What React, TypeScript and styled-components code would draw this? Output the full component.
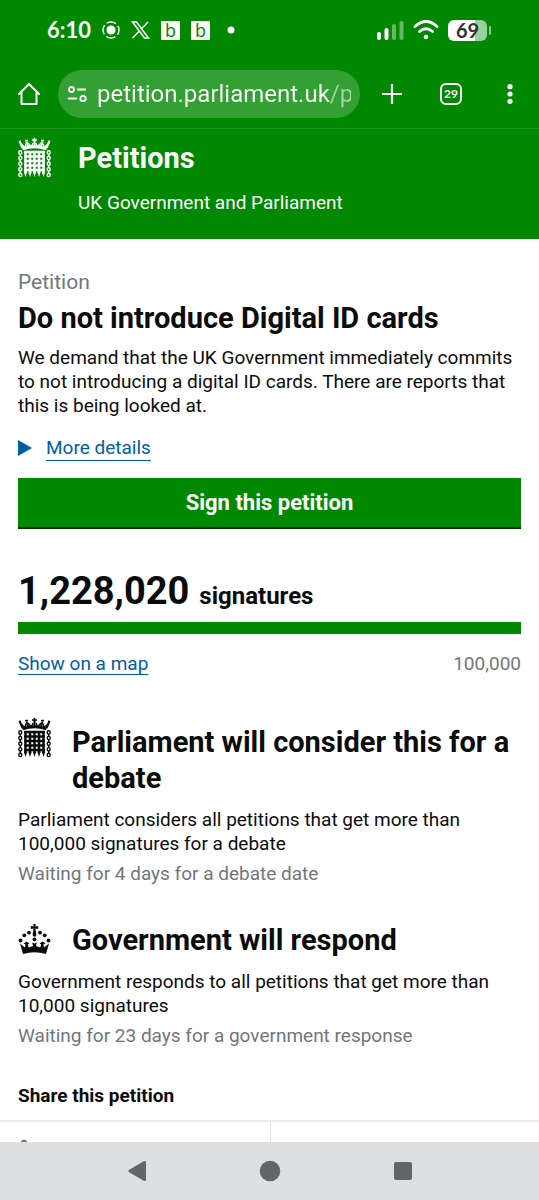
import React from 'react';
import styled, { createGlobalStyle } from 'styled-components';

const green = '#008800';
const ink = '#0b0c0c';
const grey = '#6f777b';
const blue = '#005ea5';

const GlobalStyle = createGlobalStyle`
  * { box-sizing: border-box; }
  body { margin: 0; background: #fff; }
  body, button, input { font-family: Roboto, "Liberation Sans", sans-serif; }
  h1, h2, h3, p { margin: 0; }
`;

const Screen = styled.div`
  display: flex;
  flex-direction: column;
  height: 100vh;
  color: ${ink};
`;

const BrowserChrome = styled.div`
  flex: none;
  background: ${green};
  color: #fff;
  border-bottom: 1px solid #1f961f;
`;

const StatusBar = styled.div`
  display: flex;
  align-items: center;
  justify-content: space-between;
  height: 60px;
  padding: 0 48px 0 47px;
`;

const StatusGroup = styled.div<{ $gap: number }>`
  display: flex;
  align-items: center;
  gap: ${({ $gap }) => $gap}px;
`;

const Clock = styled.span`
  font: 700 22px/28px Lato, sans-serif;
`;

const AppBadge = styled.span`
  display: grid;
  place-items: center;
  width: 19px;
  height: 19px;
  border-radius: 1px;
  background: #fff;
  color: ${green};
  font: 400 18px/19px "Open Sans", sans-serif;
`;

const Battery = styled.span`
  display: flex;
  align-items: center;
  gap: 2px;
  &::after {
    content: '';
    width: 2px;
    height: 9px;
    border-radius: 1px;
    background: #8cca8c;
  }
`;

const BatteryLevel = styled.span`
  width: 39px;
  height: 21px;
  border-radius: 6px;
  background: linear-gradient(90deg, #fff 69%, #99cf99 69%);
  color: #333;
  font: 700 20px/20px Lato, sans-serif;
  text-align: center;
`;

const AddressBar = styled.div`
  display: flex;
  align-items: center;
  height: 68px;
  padding: 0 17px;
`;

const IconButton = styled.button`
  display: grid;
  place-items: center;
  width: 24px;
  height: 48px;
  padding: 0;
  border: 0;
  background: none;
  color: #fff;
`;

const TabCount = styled.span`
  width: 22px;
  height: 22px;
  border: 2px solid #fff;
  border-radius: 6px;
  font: 700 12px/18px Lato, sans-serif;
  text-align: center;
`;

const Omnibox = styled.label`
  display: flex;
  align-items: center;
  flex: 1;
  gap: 10px;
  min-width: 0;
  height: 48px;
  margin: 0 20px 0 17px;
  padding: 0 9px 0 10px;
  border-radius: 24px;
  background: #33a033;
`;

const UrlInput = styled.input`
  flex: 1;
  min-width: 0;
  height: 40px;
  padding: 0;
  border: 0;
  outline: 0;
  color: #fff;
  background: linear-gradient(90deg, #fff 91%, #a3d5a3 92%);
  background-clip: text;
  -webkit-background-clip: text;
  -webkit-text-fill-color: transparent;
  font-size: 24px;
  line-height: 40px;
`;

const Actions = styled.div`
  display: flex;
  gap: 35px;
`;

const SiteHeader = styled.header`
  display: flex;
  flex: none;
  gap: 27px;
  min-height: 110px;
  padding: 8px 18px 0;
  background: ${green};
  color: #fff;
`;

const SiteTitle = styled.p`
  font-size: 29px;
  line-height: 42px;
  font-weight: 700;
`;

const SiteTagline = styled.p`
  margin-top: 12px;
  font-size: 19px;
  line-height: 24px;
`;

const Main = styled.main`
  flex: 1;
  min-height: 0;
  overflow: hidden;
`;

const Content = styled.div`
  padding: 30px 18px 0;
`;

const Kicker = styled.p`
  color: ${grey};
  font-size: 21px;
  line-height: 26px;
`;

const Title = styled.h1`
  margin-top: 5px;
  font-size: 29px;
  line-height: 36px;
  font-weight: 700;
`;

const Text = styled.p`
  font-size: 19px;
  line-height: 24px;
`;

const Lead = styled(Text)`
  margin-top: 10px;
`;

const Waiting = styled(Text)`
  margin-top: 6px;
  color: ${grey};
`;

const TextLink = styled.a`
  color: ${blue};
  font-size: 19px;
  line-height: 24px;
  text-decoration: underline;
  text-decoration-thickness: 1px;
  text-underline-offset: 4px;
  text-decoration-skip-ink: none;
`;

const MoreDetails = styled(TextLink)`
  display: flex;
  width: fit-content;
  gap: 14px;
  margin-top: 18px;
  text-decoration: none;
  svg { margin-top: 4px; }
  span { border-bottom: 1px solid; }
`;

const SignButton = styled.button`
  display: block;
  width: 100%;
  height: 49px;
  margin-top: 17px;
  padding: 0;
  border: 0;
  background: ${green};
  box-shadow: 0 2px 0 #003300;
  color: #fff;
  font-size: 22px;
  line-height: 49px;
  font-weight: 700;
`;

const Count = styled.p`
  display: flex;
  align-items: baseline;
  gap: 10px;
  margin-top: 40px;
  font-size: 24px;
  line-height: 48px;
  font-weight: 700;
  strong {
    font-size: 38px;
    font-weight: 700;
  }
`;

const Progress = styled.div`
  height: 12px;
  margin-top: 2px;
  background: ${green};
`;

const CountMeta = styled.div`
  display: flex;
  justify-content: space-between;
  margin-top: 18px;
  color: ${grey};
  font-size: 19px;
  line-height: 24px;
`;

const Stage = styled.section`
  margin-top: 36px;
`;

const FirstStage = styled(Stage)`
  margin-top: 41px;
`;

const StageHeading = styled.div<{ $drop?: boolean }>`
  display: flex;
  align-items: flex-start;
  gap: 21px;
  margin-bottom: 12px;
  svg { flex: none; }
  h2 {
    padding-top: ${({ $drop }) => ($drop ? 7 : 0)}px;
    font-size: 29px;
    line-height: 36px;
    font-weight: 700;
  }
`;

const ShareTitle = styled.h2`
  margin-top: 36px;
  font-size: 19px;
  line-height: 24px;
  font-weight: 700;
`;

const ShareGrid = styled.div`
  display: grid;
  grid-template-columns: 1fr 1fr;
  margin-top: 12px;
  border-top: 2px solid #ebebeb;
`;

const ShareCell = styled.div`
  height: 60px;
  padding: 17px 18px 0;
  & + & { border-left: 1px solid #e4e4e4; }
`;

const NavBar = styled.nav`
  display: flex;
  flex: none;
  align-items: center;
  justify-content: center;
  gap: 109px;
  height: 58px;
  background: #dedfe1;
  button { color: #646566; }
`;

const range = (n: number) => Array.from({ length: n }, (_, i) => i);

const Portcullis = () => (
  <svg width="33" height="41" viewBox="0 0 33 41" fill="none" stroke="currentColor" aria-hidden="true">
    <path d="M4.500 11.800Q16.500 7.600 28.500 11.800" strokeWidth="3" />
    <path d="M4.500 11 1.500 4M28.500 11l3-7M10 9.500 8.500 4.500M23 9.500l1.500-5M16.500 9V3" strokeWidth="2" />
    <path d="M2.500 6.500 7 10.500l1-4M30.500 6.500 26 10.500l-1-4M10 6l3.500 4 1.500-4M23 6l-3.500 4L18 6" strokeWidth="1.400" />
    <path d="M14 3h5M16.500.8v4M7 3.500h3M23 3.500h3M1 4.500h2M30 4.500h2" strokeWidth="1.600" />
    <g strokeWidth="2.500">
      {range(5).map((i) => <path key={i} d={`M${7.500 + i * 4.500} 14v22`} />)}
      {range(5).map((i) => <path key={i} d={`M6.200 ${15 + i * 4.500}h20.600`} />)}
    </g>
    <g fill="currentColor" stroke="none">
      {range(5).map((i) => <path key={i} d={`M${5.800 + i * 4.500} 34.500h3.400l-1.700 5.500z`} />)}
    </g>
    <g strokeWidth="1.400">
      {[2.300, 30.700].map((x) => range(5).map((i) => <ellipse key={`${x}-${i}`} cx={x} cy={15.500 + i * 5.600} rx="1.500" ry="1.700" />))}
      {[2.300, 30.700].map((x) => range(4).map((i) => <path key={`${x}-${i}`} d={`M${x} ${17 + i * 5.600}v2.600`} />))}
    </g>
  </svg>
);

const Crown = () => (
  <svg width="33" height="36" viewBox="0 0 33 36" fill="currentColor" aria-hidden="true">
    <path d="M15.300 2h2.400l-.3 2.600 2.800-.5v3l-2.800-.5.9 5.400h-3.600l.9-5.400-2.800.5v-3l2.800.5z" />
    {[[11, 10.700], [22, 10.700], [6.300, 13.300], [26.700, 13.300], [2.500, 18.500], [30.500, 18.500], [16.500, 12.800], [16.500, 17.300]].map(([x, y]) => (
      <circle key={`${x}-${y}`} cx={x} cy={y} r="1.900" />
    ))}
    <path d="M5 32 2 21.500l5 4 .5-3.200-2-.8 3-2 3 2-1.700 1 1 3 4.200-1.500-.8-3.500 2.300 1 2.300-1-.8 3.500 4.200 1.500 1-3-1.700-1 3-2 3 2-2 .8.500 3.200 5-4L28 32Q16.500 28.500 5 32z" />
  </svg>
);

export default function App() {
  return (
    <>
      <GlobalStyle />
      <Screen>
        <BrowserChrome>
          <StatusBar>
            <StatusGroup $gap={11}>
              <Clock>6:10</Clock>
              <svg width="18" height="18" viewBox="0 0 18 18" fill="none" stroke="#fff">
                <circle cx="9" cy="9" r="4.500" fill="#fff" stroke="none" />
                <circle cx="9" cy="9" r="8" strokeWidth="1.400" strokeDasharray="9.600 3" strokeDashoffset="4.800" />
              </svg>
              <svg width="19" height="18" viewBox="0 0 19 18" fill="none" stroke="#fff" strokeWidth="1.500">
                <path d="M1.500 1h4l12 16h-4zM17 1l-7 7.300M8.300 10 1.500 17" />
              </svg>
              <AppBadge>b</AppBadge>
              <AppBadge>b</AppBadge>
              <svg width="26" height="8" viewBox="0 0 26 8"><circle cx="10" cy="4" r="3.500" fill="#fff" /></svg>
            </StatusGroup>
            <StatusGroup $gap={9}>
              <svg width="27" height="19" viewBox="0 0 27 19" fill="#fff">
                <rect y="11" width="4" height="8" rx="2" />
                <rect x="7.500" y="7" width="4" height="12" rx="2" />
                <rect x="15" y="3" width="4" height="16" rx="2" opacity=".4" />
                <rect x="22.500" width="4" height="19" rx="2" opacity=".4" />
              </svg>
              <svg width="26" height="20" viewBox="0 0 26 20" fill="none" stroke="#fff" strokeWidth="2.800" strokeLinecap="round">
                <path d="M2 6.500Q13-3.500 24 6.500M6.500 11.500Q13 6 19.500 11.500" />
                <circle cx="13" cy="17" r="2.300" fill="#fff" stroke="none" />
              </svg>
              <Battery><BatteryLevel>69</BatteryLevel></Battery>
            </StatusGroup>
          </StatusBar>
          <AddressBar>
            <IconButton aria-label="Home">
              <svg width="24" height="24" viewBox="0 0 24 24" fill="none" stroke="#fff" strokeWidth="2" strokeLinejoin="round" strokeLinecap="round">
                <path d="M2 12 12 2l10 10M4.500 10v12h15V10" />
              </svg>
            </IconButton>
            <Omnibox>
              <svg width="19" height="16" viewBox="0 0 19 16" fill="none" stroke="#fff" strokeWidth="1.800">
                <circle cx="3.500" cy="3.500" r="2.500" /><path d="M9 3.500h9M0 12.500h9" /><circle cx="15" cy="12.500" r="2.700" />
              </svg>
              <UrlInput aria-label="Address" readOnly value="petition.parliament.uk/p" />
            </Omnibox>
            <Actions>
              <IconButton aria-label="New tab">
                <svg width="20" height="20" viewBox="0 0 20 20" stroke="#fff" strokeWidth="2.200"><path d="M10 0v20M0 10h20" /></svg>
              </IconButton>
              <IconButton aria-label="Tabs">
                <TabCount>29</TabCount>
              </IconButton>
              <IconButton aria-label="Menu">
                <svg width="6" height="20" viewBox="0 0 6 20" fill="#fff"><circle cx="3" cy="2.700" r="2.600" /><circle cx="3" cy="10" r="2.600" /><circle cx="3" cy="17.300" r="2.600" /></svg>
              </IconButton>
            </Actions>
          </AddressBar>
        </BrowserChrome>
        <SiteHeader>
          <Portcullis />
          <div>
            <SiteTitle>Petitions</SiteTitle>
            <SiteTagline>UK Government and Parliament</SiteTagline>
          </div>
        </SiteHeader>
        <Main>
          <Content>
            <Kicker>Petition</Kicker>
            <Title>Do not introduce Digital ID cards</Title>
            <Lead>We demand that the UK Government immediately commits to not introducing a digital ID cards. There are reports that this is being looked at.</Lead>
            <MoreDetails href="#details">
              <svg width="14" height="16" viewBox="0 0 14 16" fill="currentColor"><path d="M0 0 14 8 0 16z" /></svg>
              <span>More details</span>
            </MoreDetails>
            <SignButton>Sign this petition</SignButton>
            <Count><strong>1,228,020</strong> signatures</Count>
            <Progress />
            <CountMeta>
              <TextLink href="#map">Show on a map</TextLink>
              <span>100,000</span>
            </CountMeta>
            <FirstStage>
              <StageHeading $drop>
                <Portcullis />
                <h2>Parliament will consider this for a debate</h2>
              </StageHeading>
              <Text>Parliament considers all petitions that get more than 100,000 signatures for a debate</Text>
              <Waiting>Waiting for 4 days for a debate date</Waiting>
            </FirstStage>
            <Stage>
              <StageHeading>
                <Crown />
                <h2>Government will respond</h2>
              </StageHeading>
              <Text>Government responds to all petitions that get more than 10,000 signatures</Text>
              <Waiting>Waiting for 23 days for a government response</Waiting>
            </Stage>
            <ShareTitle>Share this petition</ShareTitle>
          </Content>
          <ShareGrid>
            <ShareCell>
              <svg width="12" height="24" viewBox="0 0 12 24" fill="#777"><path d="M3 2Q6-1 9 2v22H3z" /></svg>
            </ShareCell>
            <ShareCell />
          </ShareGrid>
        </Main>
        <NavBar>
          <IconButton aria-label="Back">
            <svg width="20" height="22" viewBox="0 0 20 22" fill="currentColor" stroke="currentColor" strokeWidth="3" strokeLinejoin="round"><path d="M17.500 2.500v17L3 11z" /></svg>
          </IconButton>
          <IconButton aria-label="Home screen">
            <svg width="22" height="22" viewBox="0 0 22 22" fill="currentColor"><circle cx="11" cy="11" r="10.300" /></svg>
          </IconButton>
          <IconButton aria-label="Recent apps">
            <svg width="20" height="20" viewBox="0 0 20 20" fill="currentColor"><rect x="1" y="1" width="18" height="18" rx="2" /></svg>
          </IconButton>
        </NavBar>
      </Screen>
    </>
  );
}
